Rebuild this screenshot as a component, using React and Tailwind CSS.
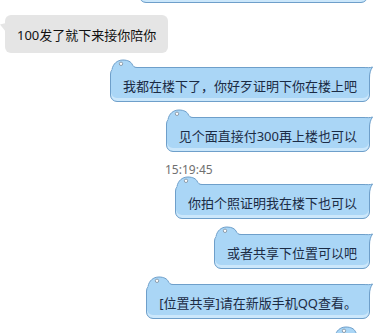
const BLUE = "#aad6f6";
const EDGE = "#6e9fca";

function Ear() {
  return (
    <svg className="absolute left-[-1px] top-[-9px] w-[30px] h-[13px] overflow-visible" viewBox="0 0 30 13">
      <path d="M2 10.5 C3 5 7 1 13 1 C18 1 21 3 22 5 C23 7 24 8.5 27 8.5 L27 13 L3 13 Z" fill={BLUE} />
      <path d="M2 10.5 C3 5 7 1 13 1 C18 1 21 3 22 5 C23 7 24 8.5 27 8.5" fill="none" stroke={EDGE} strokeWidth="1" />
      <circle cx="11" cy="4.8" r="1.7" fill="#fff" stroke="#7d8b99" strokeWidth="0.8" />
    </svg>
  );
}

function Flick() {
  return (
    <svg className="absolute right-[-7px] top-[-2px] w-[14px] h-[13px] overflow-visible" viewBox="0 0 14 13">
      <path d="M7.5 12 C7.5 7 8.5 4 10.5 1 C8 2 5 1.5 1 1.5 L1 12 Z" fill={BLUE} />
      <path d="M7.5 12 C7.5 7 8.5 4 10.5 1 C8 2 5 1.5 1 1.5" fill="none" stroke={EDGE} strokeWidth="1" />
    </svg>
  );
}

function Bubble({ children, className = "" }) {
  return (
    <div className={"relative rounded-[7px] border border-[#6e9fca] bg-[#aad6f6] px-3 pt-[9px] pb-[6px] text-[13px] leading-[18px] text-[#1b2b44] whitespace-nowrap shadow-[inset_0_-3px_0_#cbe7fb] " + className}>
      <Ear />
      <Flick />
      <span className="relative">{children}</span>
    </div>
  );
}

function Row({ children, className = "" }) {
  return <div className={"flex justify-end pr-[7px] " + className}>{children}</div>;
}

export default function App() {
  return (
    <div className="w-[377px] h-[333px] overflow-hidden bg-white [font-family:'Noto_Sans','Noto_Sans_CJK_SC',sans-serif]">
      <Row className="-mt-[32px] pr-[9px]">
        <Bubble className="w-[229px] h-[35px]" />
      </Row>

      <div className="mt-[12px] pl-[5px] flex">
        <div className="relative rounded-[6px] bg-[#e5e5e5] px-3 pt-[11px] pb-[9px] text-[13px] leading-[18px] text-[#111] whitespace-nowrap">
          <svg className="absolute left-[-5px] top-[8px] w-[6px] h-[10px]" viewBox="0 0 6 10">
            <path d="M6 0 L0 1.5 L6 9 Z" fill="#e5e5e5" />
          </svg>
          100发了就下来接你陪你
        </div>
      </div>

      <Row className="mt-[14px]">
        <Bubble>我都在楼下了，你好歹证明下你在楼上吧</Bubble>
      </Row>
      <Row className="mt-[15px]">
        <Bubble>见个面直接付300再上楼也可以</Bubble>
      </Row>

      <div className="mt-[10px] pl-[165px] text-[12px] leading-[16px] text-[#707070]">15:19:45</div>

      <Row className="mt-[6px]">
        <Bubble>你拍个照证明我在楼下也可以</Bubble>
      </Row>
      <Row className="mt-[15px]">
        <Bubble>或者共享下位置可以吧</Bubble>
      </Row>
      <Row className="mt-[15px]">
        <Bubble>[位置共享]请在新版手机QQ查看。</Bubble>
      </Row>
      <Row className="mt-[15px]">
        <Bubble className="w-[37px] h-[35px]" />
      </Row>
    </div>
  );
}
